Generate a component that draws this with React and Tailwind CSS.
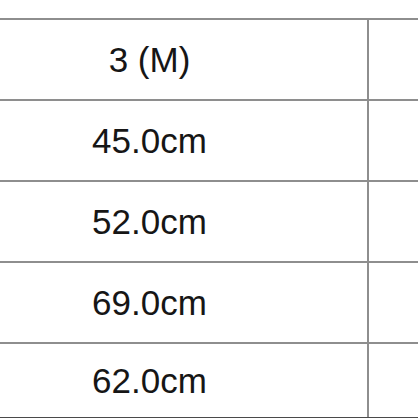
import React from "react";

const rows = ["3 (M)", "45.0cm", "52.0cm", "69.0cm", "62.0cm"];

const App = () => {
  return (
    <div className="w-[418px] h-[418px] overflow-hidden bg-white">
      <div
        className="ml-[-68px] pt-[18px] text-[#161616]"
        style={{ fontFamily: "'Liberation Sans', Arial, sans-serif" }}
      >
        {rows.map((label, i) => (
          <div
            key={i}
            className={`flex border-t-2 border-[#8e8e8e] ${
              i === rows.length - 1 ? "h-[77px] border-b-2 border-b-[#4a4a4a]" : "h-[81px]"
            }`}
          >
            <div className="w-[435px] flex items-center justify-center text-[35px] leading-none">
              {label}
            </div>
            <div className="w-[2px] bg-[#8e8e8e]" />
            <div className="flex-1" />
          </div>
        ))}
      </div>
    </div>
  );
};

export default App;
